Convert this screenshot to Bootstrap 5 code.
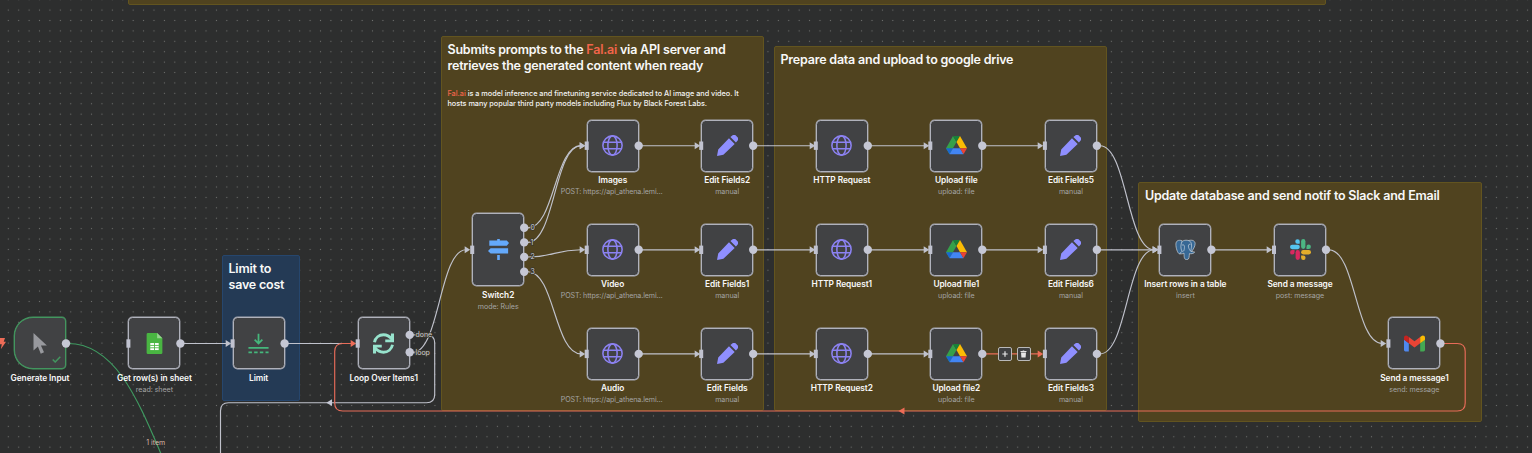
<!DOCTYPE html>
<html lang="en">
<head>
<meta charset="utf-8">
<meta name="viewport" content="width=device-width, initial-scale=1">
<title>Workflow canvas</title>
<link href="https://cdn.jsdelivr.net/npm/bootstrap@5.3.0/dist/css/bootstrap.min.css" rel="stylesheet">
<style>
body{background:#2d2e2e;font-family:Inter,"Liberation Sans",sans-serif;color:#f3f3f3}
.flow-canvas{width:1532px;height:453px;background-image:radial-gradient(circle at 50% 50%,#70716f 0,#555655 .5px,transparent 1px);background-size:10.417px 10.417px;background-position:3.1px 4.9px}
.flow-canvas svg{display:block}
.note{border:1px solid #62541f;background:#50431f;border-radius:2px;padding:5px 5.500px;width:var(--w);height:var(--h);left:var(--x);top:var(--y)}
.note-blue{background:#243a55;border-color:#26466d}
.note h2{font-size:12.5px;line-height:16px;font-weight:600;letter-spacing:-.21px;margin:0;color:#f8f8f8;white-space:nowrap}
.note p{font-size:7.3px;line-height:10px;font-weight:500;letter-spacing:-.02px;margin:15px 0 0;color:#f2f2f2;white-space:nowrap}
.note-blue h2{line-height:16.500px}
.hot{color:#f0654b}
.step{left:var(--x);top:var(--y);width:52px}
.step-box{width:52px;height:var(--h,52px);background:#414244;border:1px solid #b0b2bc;box-shadow:0 0 0 .4px #a6a8b2;border-radius:4.500px}
.step-box svg{width:21px;height:21px}
.step-start{border-color:#43965f;box-shadow:0 0 0 .4px #43965f;border-radius:19px 4px 4px 19px}
.tick{right:4px;bottom:5px}
.step-name{font-size:8.33px;line-height:10px;font-weight:600;letter-spacing:-.06px;margin-top:3.600px;color:#f8f8f8;white-space:nowrap}
.step-sub{font-size:7.1px;line-height:9px;font-weight:400;letter-spacing:-.05px;margin-top:2px;color:#a5a5a5;white-space:nowrap}
.step-url{letter-spacing:-.1px;padding-right:2px}
.edge-label{font-size:7px;fill:#cdced6}
.edge-halo{stroke:#3a372b;stroke-width:1.600px;paint-order:stroke}
.edge-tools{left:998px;top:347px;gap:4.4px}
.edge-tools button{width:14.2px;height:14.2px;border:1px solid #b9b9b9;border-radius:2px;background:#3f4041;padding:0}
.wire{fill:none;stroke:#c0c2cc;stroke-width:1.15}
.wire-hot{stroke:#e86c59}
.wire-ok{stroke:#3f9b61}
</style>
</head>
<body class="m-0 overflow-hidden">
<svg width="0" height="0" class="position-absolute" aria-hidden="true">
<defs>
<symbol id="i-cursor" viewBox="0 0 24 24"><path fill="#98999e" d="M4 0v20l5-4.700 3.300 8.400 3.700-1.600-3.500-7.700h6.800z"/></symbol>
<symbol id="i-sheet" viewBox="0 0 24 24"><path fill="#49b542" d="M4.500 0H15l6 6v16.500a1.500 1.500 0 0 1-1.500 1.500h-15A1.500 1.500 0 0 1 3 22.500v-21A1.500 1.500 0 0 1 4.500 0z"/><path fill="#96d58f" d="M15 0l6 6h-6z"/><path fill="#fff" d="M7.200 11.500h9.600v8H7.200z"/><path stroke="#49b542" stroke-width="1" d="M7 14.200h10M7 16.900h10M12 11v9" fill="none"/></symbol>
<symbol id="i-limit" viewBox="0 0 24 24"><g fill="none" stroke="#45b77c" stroke-width="2"><path d="M12 .8v10.500M7.600 7.600 12 12l4.400-4.400M.5 17h23"/><path d="M.5 22h4m2.500 0h4m2.500 0h4m2.500 0h3.500"/></g></symbol>
<symbol id="i-loop" viewBox="0 0 24 24"><g fill="none" stroke="#97e3cd" stroke-width="3.300"><path d="M1.700 10.500C2.700 5.500 7 2 12 2c4 0 7 1.800 9.500 5"/><path d="M22.300 13.500C21.300 18.500 17 22 12 22c-4 0-7-1.800-9.500-5"/></g><path fill="#97e3cd" d="M24 .5v10H14v-3h6.500v-7zM0 23.500v-10h10v3H3.500v7z"/></symbol>
<symbol id="i-switch" viewBox="0 0 24 24"><path fill="#64a9fb" d="M10.500 0h3v1.700h8l2.500 3-2.500 3h-20V1.700h9zM3 10.700h20v6H3l-3-3zM10.500 18.200h3V24h-3z"/></symbol>
<symbol id="i-globe" viewBox="0 0 24 24"><g fill="none" stroke="#8c82f2" stroke-width="1.750"><circle cx="12" cy="12" r="11"/><ellipse cx="12" cy="12" rx="5.300" ry="11"/><path d="M1.700 8.200h20.600M1.700 15.800h20.600"/></g></symbol>
<symbol id="i-pencil" viewBox="0 0 24 24"><path fill="#8f8fff" d="M13.700 3.800 20.200 10.300 7.300 22.600 0 24l1.400-7.300zM15.300 2.400 17.500.6a2.800 2.800 0 0 1 4 0l1.900 1.900a2.800 2.800 0 0 1 0 4l-1.800 2.200z"/></symbol>
<symbol id="i-drive" viewBox="0 0 24 24"><path fill="#35a04a" d="M8 1 0 15l4 7 8-14z"/><path fill="#188038" d="M8 1h8l-4 7z"/><path fill="#fbbc04" d="M16 1l8 14h-8l-4-7z"/><path fill="#1967d2" d="M0 15h8l-4 7z"/><path fill="#4285f4" d="M8 15h8l4 7H4z"/><path fill="#ea4335" d="M16 15h8l-4 7z"/></symbol>
<symbol id="i-elephant" viewBox="0 0 24 24"><g fill="#376895" stroke="#dfe5ea" stroke-width=".7" stroke-linejoin="round"><path d="M8 2C4 .6 1 2 1 6c0 4 1.800 10.500 4.200 11 1.500.2 2.200-1.500 3.800-3z"/><path d="M15 2c4-1.400 7.800-.5 8 3.300.1 3-2.500 7.200-4.500 9.700l-3-1z"/><path d="M8 3c2-2 7-2.300 9.500 0C20 6 18.700 10 18 14l4.500 1c-1.500 2-4 2-6 1.700-.5 3 .2 6.800-3 6.900-3.500.1-3-4-3.200-7.500-1.800 1.100-4 1-4.800.4L8 14c-1.800-3-1.600-8 0-11z"/><path fill="none" d="M8 7c3-1.200 3 1.500 2.700 3.500-.2 2-.2 3.500-2.200 3.700M17.700 6c-2.500-.5-2.700 1.500-2.200 3.500.5 1.700 1 3 2.500 4.500"/></g></symbol>
<symbol id="i-slack" viewBox="0 0 24 24"><g fill="#55c4ef"><path d="M11 5.500H8.700A2.600 2.600 0 1 1 11.200 3z"/><rect x="0" y="6.700" width="11.200" height="4.900" rx="2.450"/></g><g fill="#4cb583"><rect x="12.700" y="0" width="4.900" height="11.300" rx="2.450"/><path d="M18.800 11.500V9a2.550 2.550 0 1 1 2.600 2.500z"/></g><g fill="#e4ae2b"><rect x="12.700" y="12.700" width="11.300" height="4.900" rx="2.450"/><path d="M12.700 18.800h2.500a2.550 2.550 0 1 1-2.500 2.600z"/></g><g fill="#da2860"><rect x="6.400" y="12.700" width="4.900" height="11.300" rx="2.450"/><path d="M5.200 12.700v2.500a2.550 2.550 0 1 1-2.600-2.500z"/></g></symbol>
<symbol id="i-gmail" viewBox="0 0 24 24"><path fill="#4f88ef" d="M0 7.500l5.500 4.200V21H1.600A1.600 1.600 0 0 1 0 19.400z"/><path fill="#43a853" d="M24 7.500l-5.500 4.200V21h3.900a1.600 1.600 0 0 0 1.600-1.600z"/><path fill="#e94435" d="M5.500 4.500 12 9.400l6.500-4.900v7.200L12 16.600l-6.500-4.900z"/><path fill="#c5221f" d="M0 5.500C0 3 2.500 2.300 4.300 3.600l1.200.9v7.200L0 7.600z"/><path fill="#fbbc04" d="M24 5.500c0-2.500-2.500-3.200-4.300-1.900l-1.200.9v7.200L24 7.600z"/></symbol>
</defs>
</svg>

<main class="flow-canvas position-relative overflow-hidden">
  <section class="note position-absolute" style="--x:128px;--y:-20px;--w:1198px;--h:25px"></section>
  <section class="note position-absolute" style="--x:441px;--y:36px;--w:323px;--h:375px">
    <h2>Submits prompts to the <span class="hot">Fal.ai</span> via API server and<br>retrieves the generated content when ready</h2>
    <p><span class="hot">Fal.ai</span> is a model inference and finetuning service dedicated to AI image and video. It<br>hosts many popular third party models including Flux by Black Forest Labs.</p>
  </section>
  <section class="note position-absolute" style="--x:774px;--y:46.400px;--w:333.300px;--h:364.500px"><h2>Prepare data and upload to google drive</h2></section>
  <section class="note position-absolute" style="--x:1138.400px;--y:182px;--w:343.400px;--h:239.500px"><h2>Update database and send notif to Slack and Email</h2></section>
  <section class="note note-blue position-absolute" style="--x:222px;--y:254.600px;--w:78.400px;--h:146.400px"><h2>Limit to<br>save cost</h2></section>

  <svg id="wires" class="position-absolute top-0 start-0" width="1532" height="453"></svg>
  <div id="steps"></div>
  <svg id="ports" class="position-absolute top-0 start-0 pe-none" width="1532" height="453"></svg>

  <div class="edge-tools position-absolute d-flex">
    <button class="d-flex align-items-center justify-content-center" aria-label="Add"><svg width="6" height="6" viewBox="0 0 6 6"><path d="M3 .3v5.400M.3 3h5.400" stroke="#e6e6e6" stroke-width="1.200"/></svg></button>
    <button class="d-flex align-items-center justify-content-center" aria-label="Delete"><svg width="7" height="8" viewBox="0 0 7 8"><path d="M.5 1h2l.4-.6h1.200l.4.600h2v1H.5zM1 2.500h5l-.4 5.100H1.400z" fill="#e6e6e6"/></svg></button>
  </div>
</main>

<script src="https://cdn.jsdelivr.net/npm/bootstrap@5.3.0/dist/js/bootstrap.bundle.min.js"></script>
<script>
const url = 'POST: https://api_athena.lemi…';
// icon, centre x, centre y, name, subtitle, options
const steps = [
  ['cursor', 40, 343.5, 'Generate Input', '', {start: true}],
  ['sheet', 154.4, 343.5, 'Get row(s) in sheet', 'read: sheet'],
  ['limit', 258.6, 343.5, 'Limit', ''],
  ['loop', 383.7, 343.5, 'Loop Over Items1', '', {outs: [-8.6, 8.8], labels: ['done', 'loop']}],
  ['switch', 498.2, 249.8, 'Switch2', 'mode: Rules', {h: 73, outs: [-22, -7.4, 7.2, 21.9], labels: ['0', '1', '2', '3']}],
  ['globe', 612.7, 145.7, 'Images', url], ['pencil', 727.2, 145.7, 'Edit Fields2', 'manual'],
  ['globe', 612.7, 249.8, 'Video', url], ['pencil', 727.2, 249.8, 'Edit Fields1', 'manual'],
  ['globe', 612.7, 353.9, 'Audio', url], ['pencil', 727.2, 353.9, 'Edit Fields', 'manual'],
  ['globe', 841.8, 145.7, 'HTTP Request', ''], ['drive', 956.3, 145.7, 'Upload file', 'upload: file'], ['pencil', 1070.9, 145.7, 'Edit Fields5', 'manual'],
  ['globe', 841.8, 249.8, 'HTTP Request1', ''], ['drive', 956.3, 249.8, 'Upload file1', 'upload: file'], ['pencil', 1070.9, 249.8, 'Edit Fields6', 'manual'],
  ['globe', 841.8, 353.9, 'HTTP Request2', ''], ['drive', 956.3, 353.9, 'Upload file2', 'upload: file'], ['pencil', 1070.9, 353.9, 'Edit Fields3', 'manual'],
  ['elephant', 1185.4, 249.8, 'Insert rows in a table', 'insert'],
  ['slack', 1300, 249.8, 'Send a message', 'post: message'],
  ['gmail', 1414.4, 343.5, 'Send a message1', 'send: message']
];
let html = '', ports = '';
for (const [icon, x, y, name, sub, o = {}] of steps) {
  const h = o.h || 52;
  html += `<div class="step position-absolute d-flex flex-column align-items-center" style="--x:${x - 26}px;--y:${y - h / 2 - .05}px;--h:${h}px">
    <div class="step-box ${o.start ? 'step-start' : ''} position-relative d-flex align-items-center justify-content-center flex-shrink-0">
      <svg><use href="#i-${icon}"/></svg>${o.start ? '<svg class="tick position-absolute" style="width:9px;height:7px" viewBox="0 0 9 7"><path d="M.7 3.500 3.200 6 8.300.8" fill="none" stroke="#43965f" stroke-width="1.500"/></svg>' : ''}
    </div>
    <div class="step-name">${name}</div>${sub ? `<div class="step-sub ${sub === url ? 'step-url' : ''}">${sub}</div>` : ''}</div>`;
  if (!o.start) ports += `<rect x="${x - 28}" y="${y - 4.2}" width="4" height="8.400" fill="#c0c2cf"/>`;
  (o.outs || [0]).forEach((d, i) => {
    ports += `<circle cx="${x + 26}" cy="${y + d}" r="4.200" fill="#c5c7d4"/>`;
    if (o.labels) ports += `<text class="edge-label edge-halo" x="${x + (icon === 'loop' ? 31.8 : 32.4)}" y="${y + d + 2.3}">${o.labels[i]}</text>`;
  });
}
document.getElementById('steps').innerHTML = html;
document.getElementById('ports').innerHTML = ports +
  '<text class="edge-label" x="146.200" y="444.800" style="fill:#dcb9a8">1 item</text>';

// source x, source y, target input x, target y, modifier
const links = [
  [184, 343.5, 232, 343.5], [288, 343.5, 357, 343.5, 'loopin'],
  [413, 352.3, 471, 249.8],
  [528, 227.8, 586, 145.7], [528, 242.4, 586, 145.7], [528, 257, 586, 249.8], [528, 271.7, 586, 353.9],
  [1100, 145.7, 1159, 249.8], [1100, 249.8, 1159, 249.8], [1100, 353.9, 1159, 249.8],
  [1215, 249.8, 1273, 249.8], [1329, 249.8, 1387, 343.5]
];
for (const y of [145.7, 249.8, 353.9])
  for (const x of [641, 756, 870, 985]) links.push([x, y, x + 60 - (x === 985 ? 1 : 0), y, x === 985 && y > 350 ? 'hot' : '']);
let w = '';
for (const [a, b, c, d, m] of links) {
  const e = c - 5, mid = (a + e) / 2, hot = m === 'hot';
  w += `<path class="wire ${hot ? 'wire-hot' : ''}" d="M${a} ${b}C${mid} ${b} ${mid} ${d} ${e} ${d}"/>
    <path d="M${c - 6.300} ${d - 3.500}l5.500 3.500-5.500 3.500z" fill="${m ? '#ee6c57' : '#c0c2cc'}"/>`;
}
w += `<path class="wire wire-ok" d="M68 343.500C160 343.500 160 559.500 252 559.500"/>
  <path class="wire" d="M413 334.900h13.500q8.200 0 8.200 8.200v51.400q0 8.200-8.200 8.200H228.500q-8 0-8 8V453"/>
  <path d="M332 399.300v6.800l-5.700-3.400z" fill="#c5c7d4"/>
  <path class="wire wire-hot" d="M1444 343.500h13.200q8 0 8 8V403q0 8-8 8H342.700q-8 0-8-8v-51.500q0-8 8-8H352"/>
  <path d="M904.500 407.600v6.800l-6-3.400z" fill="#ee6c57"/>
  <path d="M-1 338H5L3.700 341.700H6L.8 349.300 1.800 344.300H-1z" fill="#ee6c57"/>`;
document.getElementById('wires').innerHTML = w;
</script>
</body>
</html>
